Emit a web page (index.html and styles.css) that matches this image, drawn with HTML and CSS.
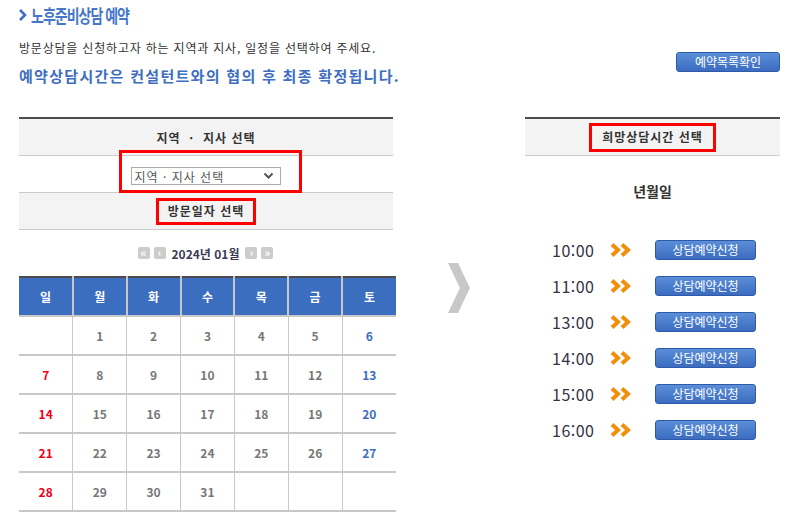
FILE: index.html
```html
<!DOCTYPE html>
<html lang="ko">
<head>
    <meta charset="UTF-8">
    <title>노후준비상담 예약</title>
    <link rel="stylesheet" href="styles.css">
</head>
<body>
    <div class="page">
        <h1 class="title">
            <svg class="title-arrow" width="8" height="12" viewBox="0 0 8 12"><path d="M1 1 L6 6 L1 11" fill="none" stroke="#3d6fc6" stroke-width="2.6"/></svg>
            <span class="title-text">노후준비상담 예약</span>
        </h1>
        <p class="desc">방문상담을 신청하고자 하는 지역과 지사, 일정을 선택하여 주세요.</p>
        <div class="notice-row">
            <p class="notice">예약상담시간은 컨설턴트와의 협의 후 최종 확정됩니다.</p>
            <a href="#" class="blue-btn list-btn">예약목록확인</a>
        </div>

        <div class="content">
            <!-- 지역/지사, 방문일자 -->
            <div class="left">
                <div class="sec-head first">지역 &nbsp;·&nbsp; 지사 선택</div>
                <div class="sec-select">
                    <div class="select-box">
                        <span>지역 · 지사 선택</span>
                        <svg width="11" height="8" viewBox="0 0 11 8"><path d="M1.5 1.5 L5.5 5.5 L9.5 1.5" fill="none" stroke="#555" stroke-width="2"/></svg>
                    </div>
                    <div class="mark mark-select"></div>
                </div>
                <div class="sec-head"><span class="mark-text">방문일자 선택</span></div>

                <div class="month-nav">
                    <span class="nav-btn">«</span>
                    <span class="nav-btn">‹</span>
                    <span class="month">2024년 01월</span>
                    <span class="nav-btn">›</span>
                    <span class="nav-btn">»</span>
                </div>

                <table class="calendar">
                    <thead>
                        <tr><th>일</th><th>월</th><th>화</th><th>수</th><th>목</th><th>금</th><th>토</th></tr>
                    </thead>
                    <tbody>
                        <tr><td></td><td>1</td><td>2</td><td>3</td><td>4</td><td>5</td><td class="sat">6</td></tr>
                        <tr><td class="sun">7</td><td>8</td><td>9</td><td>10</td><td>11</td><td>12</td><td class="sat">13</td></tr>
                        <tr><td class="sun">14</td><td>15</td><td>16</td><td>17</td><td>18</td><td>19</td><td class="sat">20</td></tr>
                        <tr><td class="sun">21</td><td>22</td><td>23</td><td>24</td><td>25</td><td>26</td><td class="sat">27</td></tr>
                        <tr><td class="sun">28</td><td>29</td><td>30</td><td>31</td><td></td><td></td><td></td></tr>
                    </tbody>
                </table>
            </div>

            <div class="middle">
                <svg width="26" height="50" viewBox="0 0 26 50"><path d="M3 0 L13 0 L25 25 L13 50 L3 50 L15 25 Z" fill="#c8c8c8"/></svg>
            </div>

            <!-- 희망상담시간 -->
            <div class="right">
                <div class="sec-head first"><span class="mark-text time-mark">희망상담시간 선택</span></div>
                <div class="date-label">년월일</div>
                <ul class="times">
                    <li><span class="time">10:00</span><svg class="arrows" width="24" height="14" viewBox="0 0 24 14"><path d="M2 1.5 L8 7 L2 12.5 M12 1.5 L18 7 L12 12.5" fill="none" stroke="#f0900a" stroke-width="4"/></svg><a href="#" class="blue-btn time-btn">상담예약신청</a></li>
                    <li><span class="time">11:00</span><svg class="arrows" width="24" height="14" viewBox="0 0 24 14"><path d="M2 1.5 L8 7 L2 12.5 M12 1.5 L18 7 L12 12.5" fill="none" stroke="#f0900a" stroke-width="4"/></svg><a href="#" class="blue-btn time-btn">상담예약신청</a></li>
                    <li><span class="time">13:00</span><svg class="arrows" width="24" height="14" viewBox="0 0 24 14"><path d="M2 1.5 L8 7 L2 12.5 M12 1.5 L18 7 L12 12.5" fill="none" stroke="#f0900a" stroke-width="4"/></svg><a href="#" class="blue-btn time-btn">상담예약신청</a></li>
                    <li><span class="time">14:00</span><svg class="arrows" width="24" height="14" viewBox="0 0 24 14"><path d="M2 1.5 L8 7 L2 12.5 M12 1.5 L18 7 L12 12.5" fill="none" stroke="#f0900a" stroke-width="4"/></svg><a href="#" class="blue-btn time-btn">상담예약신청</a></li>
                    <li><span class="time">15:00</span><svg class="arrows" width="24" height="14" viewBox="0 0 24 14"><path d="M2 1.5 L8 7 L2 12.5 M12 1.5 L18 7 L12 12.5" fill="none" stroke="#f0900a" stroke-width="4"/></svg><a href="#" class="blue-btn time-btn">상담예약신청</a></li>
                    <li><span class="time">16:00</span><svg class="arrows" width="24" height="14" viewBox="0 0 24 14"><path d="M2 1.5 L8 7 L2 12.5 M12 1.5 L18 7 L12 12.5" fill="none" stroke="#f0900a" stroke-width="4"/></svg><a href="#" class="blue-btn time-btn">상담예약신청</a></li>
                </ul>
            </div>
        </div>
    </div>
</body>
</html>
```

FILE: styles.css
```css
body {
    margin: 0;
    padding: 0;
    background-color: #fff;
    color: #333;
    font-family: "Noto Sans CJK KR", "Noto Sans", sans-serif;
}

.page {
    width: 761px;
    padding: 0 14px 0 19px;
}

.title {
    display: flex;
    align-items: center;
    height: 26px;
    margin: 2px 0 0 0;
    font-size: 14px;
    font-weight: bold;
    color: #4676c9;
}

.title-arrow {
    margin-right: 4px;
}

.title-text {
    display: inline-block;
    letter-spacing: -1px;
    transform: scaleY(1.3);
}

.desc {
    margin: 12px 0 0 0;
    font-size: 12px;
    line-height: 16px;
    letter-spacing: 0.8px;
    color: #333;
}

.notice-row {
    display: flex;
    justify-content: space-between;
    align-items: flex-start;
}

.notice {
    margin: 9px 0 0 0;
    font-size: 15px;
    font-weight: bold;
    line-height: 22px;
    letter-spacing: 1.3px;
    color: #3e6ec0;
}

.blue-btn {
    display: inline-block;
    box-sizing: border-box;
    text-align: center;
    color: #fff;
    text-decoration: none;
    font-size: 12px;
    background: linear-gradient(#5b8ed8, #3b6cc0);
    border: 1px solid #2f5aa8;
    border-radius: 3px;
}

.list-btn {
    width: 104px;
    height: 20px;
    line-height: 18px;
    margin-top: -4px;
}

.content {
    display: flex;
    margin-top: 30px;
}

.left {
    width: 377px;
}

.sec-head {
    height: 36px;
    display: flex;
    align-items: center;
    justify-content: center;
    background-color: #f3f3f3;
    border-bottom: 1px solid #ccc;
    font-size: 12px;
    font-weight: bold;
    letter-spacing: 1px;
    color: #333;
}

.left .sec-head {
    width: 374px;
}

.sec-head.first {
    border-top: 2px solid #4c4c4c;
}

.sec-select {
    position: relative;
    width: 374px;
    height: 36px;
    display: flex;
    align-items: center;
    justify-content: center;
    border-bottom: 1px solid #ccc;
}

.select-box {
    box-sizing: border-box;
    width: 150px;
    height: 18px;
    margin: 4px 0 0 -1px;
    padding: 0 6px 0 3px;
    display: flex;
    justify-content: space-between;
    align-items: center;
    border: 1px solid #aaa;
    font-size: 12px;
    letter-spacing: 1px;
    color: #555;
}

.mark {
    position: absolute;
    box-sizing: border-box;
    border: 3px solid #f00;
}

.mark-select {
    left: 100px;
    top: -6px;
    width: 183px;
    height: 43px;
}

.mark-text {
    display: inline-block;
    padding: 1px 9px 2px 9px;
    border: 3px solid #f00;
    line-height: 18px;
}

.time-mark {
    padding: 2px 10px 3px 10px;
}

.month-nav {
    height: 46px;
    display: flex;
    align-items: center;
    justify-content: center;
    gap: 4px;
    margin-left: -4px;
}

.nav-btn {
    width: 12px;
    height: 12px;
    line-height: 11px;
    text-align: center;
    background-color: #ccc;
    border-radius: 2px;
    color: #fff;
    font-size: 11px;
    font-weight: bold;
    letter-spacing: 0;
}

.month {
    margin: 0 2px;
    font-size: 12px;
    font-weight: bold;
    color: #3a3a55;
}

.calendar {
    width: 377px;
    border-collapse: collapse;
    table-layout: fixed;
    border-top: 2px solid #4c4c4c;
}

.calendar th {
    height: 37px;
    padding: 0;
    background-color: #3c6ec0;
    color: #fff;
    font-size: 12px;
    font-weight: bold;
    border-left: 2px solid #c8c8c8;
    border-bottom: 2px solid #c8c8c8;
}

.calendar td {
    height: 37px;
    padding: 0;
    text-align: center;
    font-size: 12px;
    font-weight: bold;
    color: #777;
    border: 1px solid #c8c8c8;
    border-width: 1px 1px 2px 1px;
}

.calendar th:first-child {
    border-left: none;
}

.calendar td:first-child {
    border-left: none;
}

.calendar td:last-child {
    border-right: none;
}

.calendar .sun {
    color: #f00018;
}

.calendar .sat {
    color: #3c6ec0;
}

.middle {
    width: 129px;
    display: flex;
    justify-content: center;
    padding-top: 146px;
    padding-right: 6px;
    box-sizing: border-box;
}

.right {
    width: 255px;
}

.date-label {
    height: 70px;
    line-height: 70px;
    text-align: center;
    font-size: 14px;
    font-weight: bold;
    color: #333;
}

.times {
    list-style: none;
    margin: 0;
    padding: 6px 0 0 27px;
}

.times li {
    height: 36px;
    display: flex;
    align-items: center;
}

.time {
    width: 56px;
    font-size: 16px;
    color: #333345;
    letter-spacing: 0.5px;
}

.arrows {
    margin: 0 21px 0 2px;
}

.time-btn {
    width: 101px;
    height: 20px;
    line-height: 18px;
}
```
